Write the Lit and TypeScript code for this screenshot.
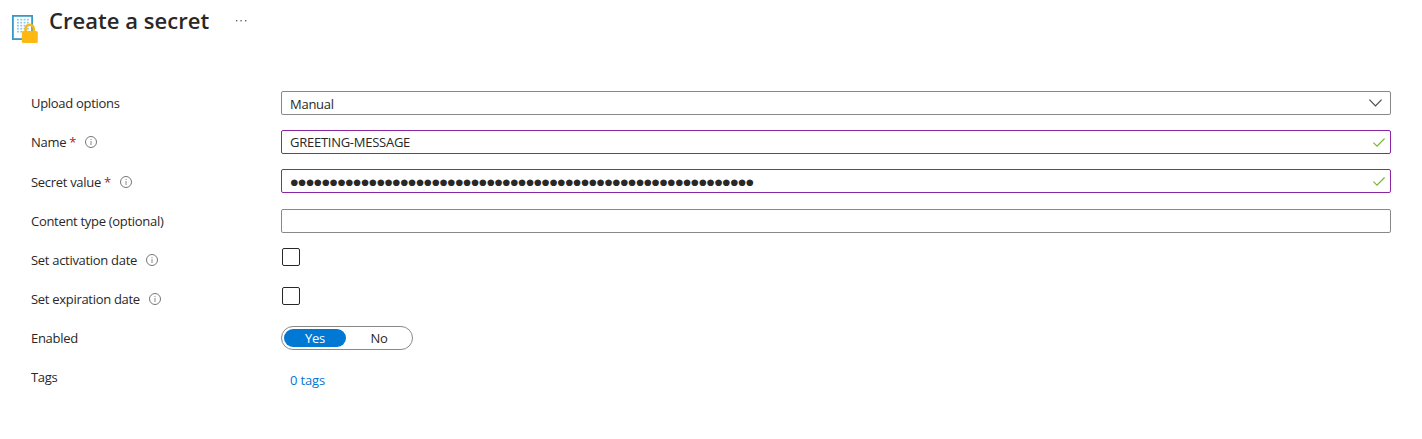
import { LitElement, html, css, svg, nothing } from "lit";
import { customElement } from "lit/decorators.js";
import { classMap } from "lit/directives/class-map.js";

const infoIcon = html`<svg class="info" width="12" height="12" viewBox="0 0 12 12" fill="none">
  <circle cx="6" cy="6" r="5.5" stroke="#797775" />
  <path d="M6 5v4M6 3v1" stroke="#8a8886" />
</svg>`;

const checkIcon = html`<svg width="12" height="9" viewBox="0 0 12 9" fill="none">
  <path d="M.4 4.6 4 8.1 11.6.5" stroke="#7ab534" stroke-width="1.2" />
</svg>`;

const chevronIcon = html`<svg width="13" height="8" viewBox="0 0 13 8" fill="none">
  <path d="M.4.6 6.5 6.8 12.6.6" stroke="#4a4846" stroke-width="1.2" />
</svg>`;

const gridDots = [0, 1, 2, 3, 4].flatMap((r) =>
  [0, 1, 2, 3].map(
    (c) => svg`<rect x=${6 + c * 3.3} y=${4.8 + r * 3} width="1.9" height="1.7" fill="#8ccbe6" />`
  )
);

@customElement("app-root")
export class AppRoot extends LitElement {
  static styles = css`
    :host {
      display: block;
      height: 439px;
      overflow: hidden;
      box-sizing: border-box;
      background: #fff;
      color: #292827;
      font: 13px/24px "Open Sans", "Noto Sans", sans-serif;
      letter-spacing: -0.26px;
      white-space: nowrap;
    }
    * {
      box-sizing: border-box;
    }
    svg {
      display: block;
      flex: none;
    }
    header {
      display: flex;
      height: 91px;
      padding: 5px 0 0 11px;
    }
    .logo {
      margin-top: 9px;
    }
    h1 {
      margin: 0 0 0 10px;
      width: 186px;
      font-size: 22px;
      line-height: 30px;
      font-weight: 600;
      letter-spacing: 0.04px;
    }
    .more {
      margin-top: 14px;
    }
    .form {
      display: grid;
      grid-template-columns: 250px 1110px;
      grid-template-rows: 39px 39px 40px 39px 39px 39px 39px 39px;
      padding-left: 31px;
    }
    .label {
      display: flex;
      align-items: center;
      height: 24px;
      letter-spacing: -0.3px;
    }
    .label.low {
      height: 26px;
    }
    .req {
      margin-left: 3px;
      color: #a4262c;
    }
    .info {
      margin-left: 9px;
    }
    .field {
      display: flex;
      align-items: center;
      justify-content: space-between;
      height: 24px;
      padding: 0 5px 0 8px;
      border: 1px solid #8a8886;
      border-radius: 2px;
    }
    .select {
      padding-right: 8px;
    }
    .select span {
      padding-top: 2px;
    }
    .valid {
      border-color: #8a26a3;
    }
    .caps {
      letter-spacing: -0.26px;
    }
    .dots {
      padding: 2px 0 0 0.5px;
      font: 8.7px/22px "DejaVu Sans", sans-serif;
      letter-spacing: 0.275px;
    }
    .box {
      width: 18px;
      height: 18px;
      margin: 0 0 0 1px;
      border: 1px solid #292827;
      border-radius: 2px;
    }
    .toggle {
      display: flex;
      gap: 2px;
      width: 132px;
      height: 24px;
      padding: 2px;
      border: 1px solid #8a8886;
      border-radius: 12px;
      line-height: 18px;
      text-align: center;
    }
    .option {
      width: 62px;
      height: 18px;
      border-radius: 9px;
    }
    .on {
      background: #0078d4;
      color: #fff;
    }
    .link {
      padding: 3px 0 0 9px;
      color: #0078d4;
      letter-spacing: -0.16px;
    }
  `;

  label(text: string, required = false, info = false, low = false) {
    return html`<div class=${classMap({ label: true, low })}>
      <span>${text}</span>${required ? html`<span class="req">*</span>` : nothing}${info ? infoIcon : nothing}
    </div>`;
  }

  field(content: unknown, icon: unknown = nothing, kind = "") {
    return html`<div class=${classMap({ field: true, valid: kind === "valid", select: kind === "select" })}>
      ${content}${icon}
    </div>`;
  }

  render() {
    return html`
      <header>
        <svg class="logo" width="28" height="30" viewBox="0 0 28 30">
          <rect x="1.9" y="1.9" width="19.2" height="23.2" fill="#fff" stroke="#3999c6" stroke-width="1.8" />
          ${gridDots}
          <path d="M14.6 18v-3.2a4.1 4.1 0 0 1 8.2 0v3.2" fill="none" stroke="#fdb913" stroke-width="2.6" />
          <rect x="10.8" y="17" width="16" height="12" rx="1.5" fill="#fdb913" />
        </svg>
        <h1>Create a secret</h1>
        <svg class="more" width="13" height="4" viewBox="0 0 13 4" fill="#605e5c">
          <rect x="1" y="1" width="1.3" height="1.4" />
          <rect x="5.4" y="1" width="1.3" height="1.4" />
          <rect x="10" y="1" width="1.3" height="1.4" />
        </svg>
      </header>
      <div class="form">
        ${this.label("Upload options")}
        ${this.field(html`<span>Manual</span>`, chevronIcon, "select")}
        ${this.label("Name", true, true)}
        ${this.field(html`<span class="caps">GREETING-MESSAGE</span>`, checkIcon, "valid")}
        ${this.label("Secret value", true, true, true)}
        ${this.field(html`<span class="dots">${"●".repeat(59)}</span>`, checkIcon, "valid")}
        ${this.label("Content type (optional)")} ${this.field(nothing)}
        ${this.label("Set activation date", false, true)}
        <div class="box"></div>
        ${this.label("Set expiration date", false, true)}
        <div class="box"></div>
        ${this.label("Enabled")}
        <div class="toggle">
          <span class="option on">Yes</span>
          <span class="option">No</span>
        </div>
        ${this.label("Tags")}
        <div class="link">0 tags</div>
      </div>
    `;
  }
}
